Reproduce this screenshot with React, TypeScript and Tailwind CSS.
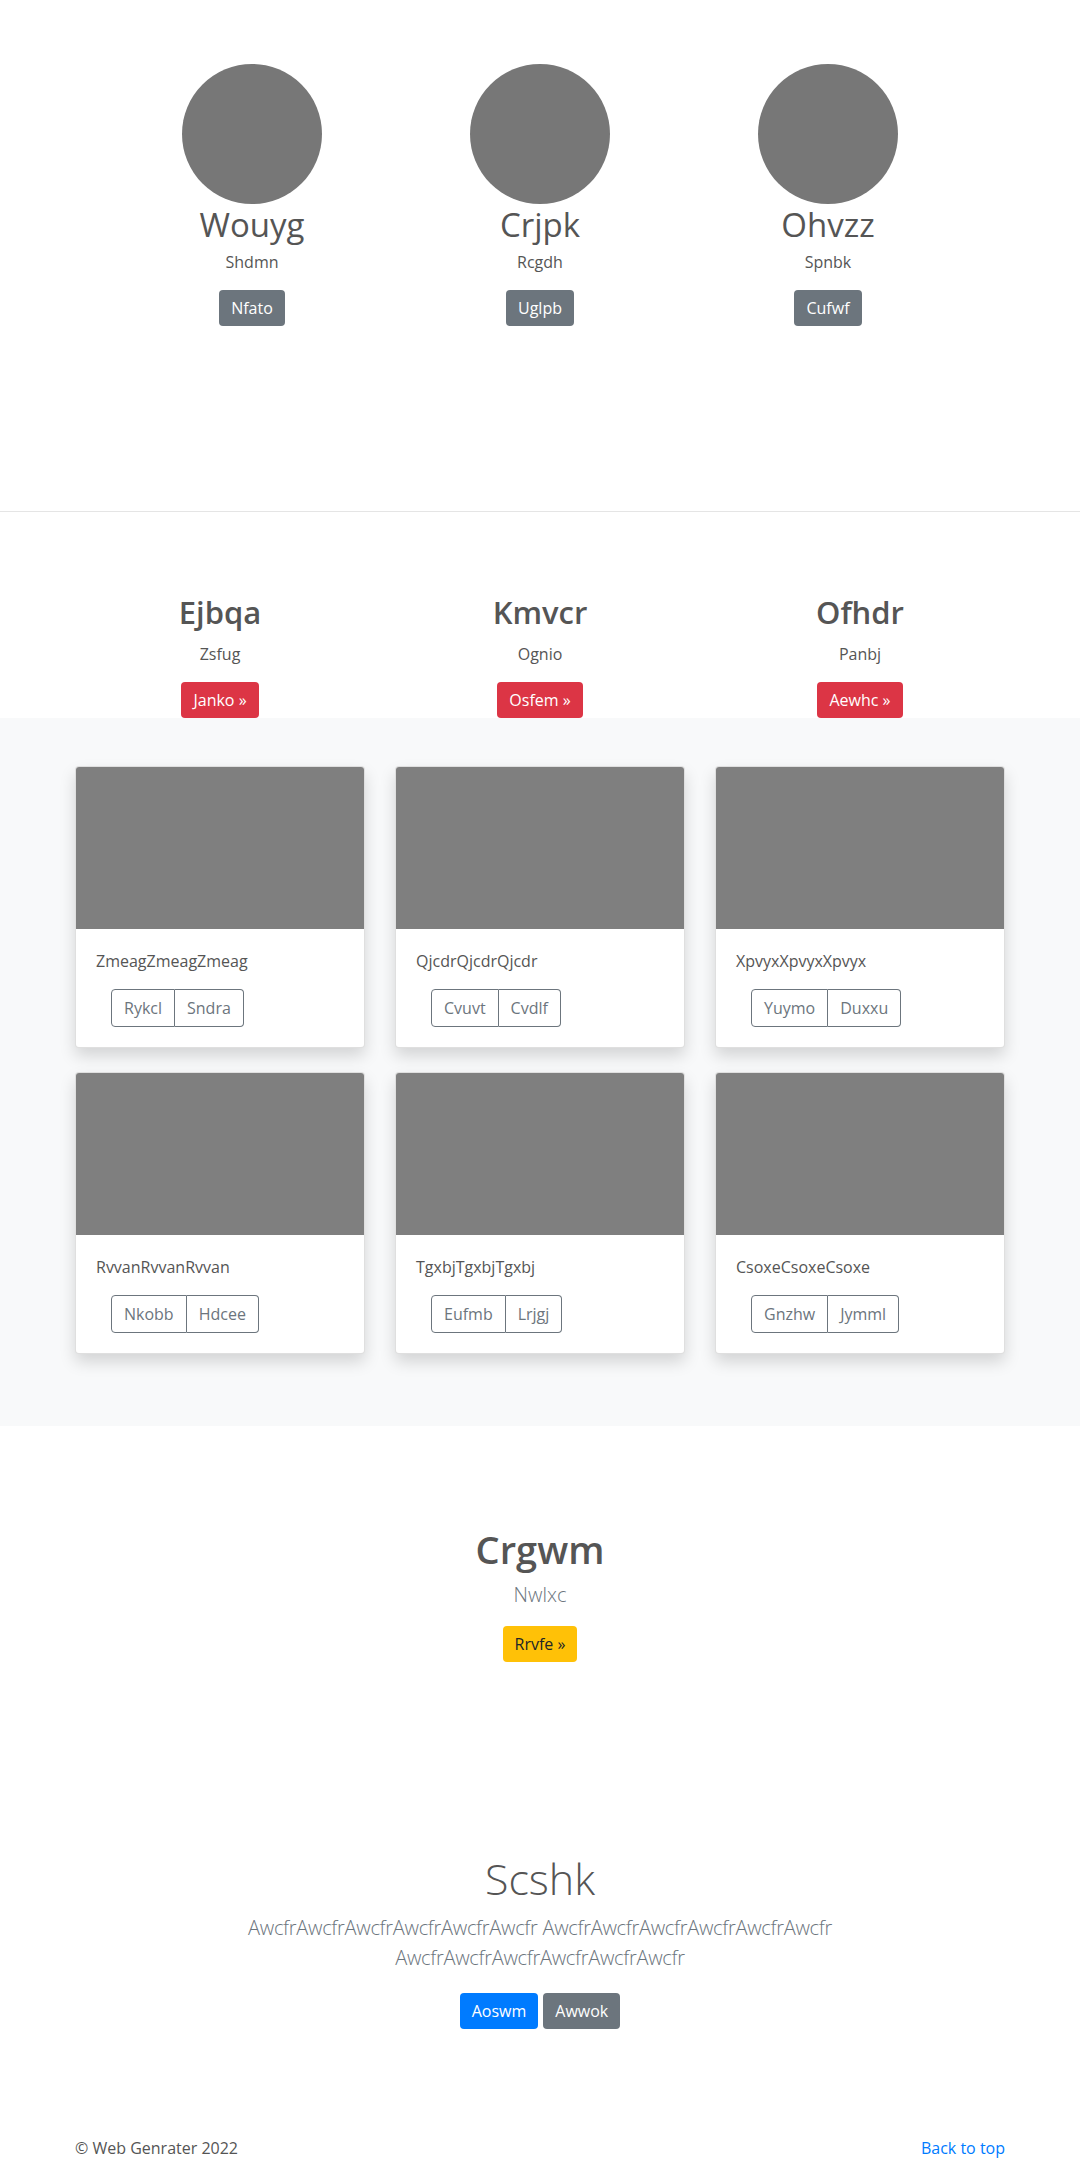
import React from 'react';

const font = { fontFamily: '"Open Sans", "Noto Sans", sans-serif' };

const team = [
  { name: 'Wouyg', sub: 'Shdmn', btn: 'Nfato' },
  { name: 'Crjpk', sub: 'Rcgdh', btn: 'Uglpb' },
  { name: 'Ohvzz', sub: 'Spnbk', btn: 'Cufwf' },
];

const features = [
  { name: 'Ejbqa', sub: 'Zsfug', btn: 'Janko »' },
  { name: 'Kmvcr', sub: 'Ognio', btn: 'Osfem »' },
  { name: 'Ofhdr', sub: 'Panbj', btn: 'Aewhc »' },
];

const cards = [
  { text: 'ZmeagZmeagZmeag', a: 'Rykcl', b: 'Sndra' },
  { text: 'QjcdrQjcdrQjcdr', a: 'Cvuvt', b: 'Cvdlf' },
  { text: 'XpvyxXpvyxXpvyx', a: 'Yuymo', b: 'Duxxu' },
  { text: 'RvvanRvvanRvvan', a: 'Nkobb', b: 'Hdcee' },
  { text: 'TgxbjTgxbjTgxbj', a: 'Eufmb', b: 'Lrjgj' },
  { text: 'CsoxeCsoxeCsoxe', a: 'Gnzhw', b: 'Jymml' },
];

export default function App() {
  return (
    <div className="min-h-screen bg-white text-[#555] text-[16px] leading-[1.5]" style={font}>
      {/* Team */}
      <section className="h-[511px] pt-[64px]">
        <div className="grid grid-cols-[288px_288px_288px] justify-center">
          {team.map((t) => (
            <div key={t.name} className="flex flex-col items-center">
              <div className="w-[140px] h-[140px] rounded-full bg-[#777]" />
              <h2 className="text-[33px] leading-[42px] font-normal mb-1">{t.name}</h2>
              <p className="mb-4">{t.sub}</p>
              <button className="bg-[#6c757d] text-white rounded-[4px] px-3 py-[6px] leading-[1.5]">{t.btn}</button>
            </div>
          ))}
        </div>
      </section>

      {/* Features */}
      <section className="border-t border-[#e5e5e5] pt-[82px]">
        <div className="w-[960px] mx-auto grid grid-cols-3">
          {features.map((f) => (
            <div key={f.name} className="flex flex-col items-center">
              <h2 className="text-[31px] leading-[1.2] font-semibold mb-[11px]">{f.name}</h2>
              <p className="mb-4">{f.sub}</p>
              <button className="bg-[#dc3545] text-white rounded-[4px] px-3 py-[6px] leading-[1.5]">{f.btn}</button>
            </div>
          ))}
        </div>
      </section>

      {/* Album */}
      <section className="bg-[#f8f9fa] pt-12 pb-[72px]">
        <div className="w-[930px] mx-auto grid grid-cols-3 gap-x-[30px] gap-y-6">
          {cards.map((c) => (
            <div key={c.text} className="bg-white border border-black/[0.125] rounded-[4px] overflow-hidden shadow-[0_0.5rem_1rem_rgba(0,0,0,0.15)]">
              <div className="h-[162px] bg-[#7f7f7f]" />
              <div className="p-5">
                <p className="mb-4">{c.text}</p>
                <div className="flex ml-[15px]">
                  <button className="border border-[#6c757d] text-[#6c757d] rounded-l-[4px] px-3 py-[6px] leading-[1.5]">{c.a}</button>
                  <button className="border border-l-0 border-[#6c757d] text-[#6c757d] rounded-r-[4px] px-3 py-[6px] leading-[1.5]">{c.b}</button>
                </div>
              </div>
            </div>
          ))}
        </div>
      </section>

      {/* Hero */}
      <section className="pt-[101px] flex flex-col items-center">
        <h1 className="text-[38px] leading-[1.2] font-semibold mb-[7px]">Crgwm</h1>
        <p className="text-[20px] font-light text-[#6c757d] mb-4">Nwlxc</p>
        <button className="bg-[#ffc107] text-[#212529] rounded-[4px] px-3 py-[6px] leading-[1.5]">Rrvfe »</button>
      </section>

      {/* Jumbotron */}
      <section className="pt-[190px] flex flex-col items-center text-center">
        <h1 className="text-[43px] leading-[54px] font-light">Scshk</h1>
        <p className="w-[610px] mt-[7px] text-[20px] tracking-[-0.3px] font-light text-[#6c757d] mb-5">
          AwcfrAwcfrAwcfrAwcfrAwcfrAwcfr AwcfrAwcfrAwcfrAwcfrAwcfrAwcfr AwcfrAwcfrAwcfrAwcfrAwcfrAwcfr
        </p>
        <div className="flex gap-[5px]">
          <button className="bg-[#007bff] text-white rounded-[4px] px-3 py-[6px] leading-[1.5]">Aoswm</button>
          <button className="bg-[#6c757d] text-white rounded-[4px] px-3 py-[6px] leading-[1.5]">Awwok</button>
        </div>
      </section>

      {/* Footer */}
      <footer className="w-[930px] mx-auto pt-[107px] flex justify-between">
        <p>© Web Genrater 2022</p>
        <a href="#" className="text-[#007bff]">Back to top</a>
      </footer>
    </div>
  );
}
